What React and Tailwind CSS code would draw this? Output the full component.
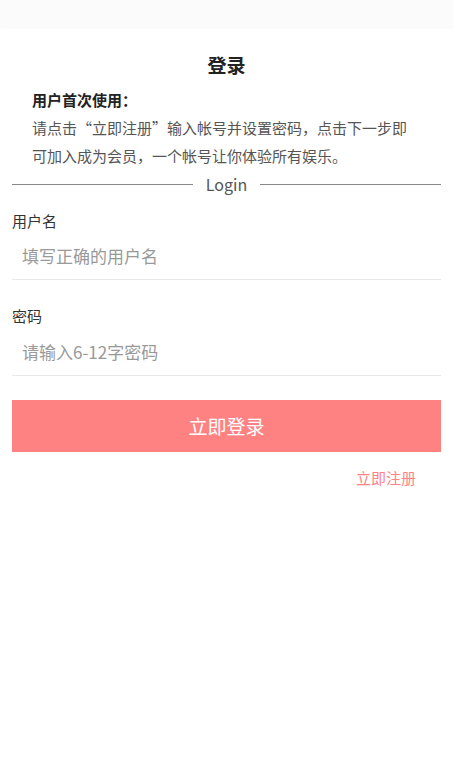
export default function App() {
  return (
    <div
      className="min-h-screen bg-white text-[#333]"
      style={{ fontFamily: '"Microsoft YaHei", "Noto Sans CJK SC", sans-serif' }}
    >
      {/* header strip */}
      <div className="h-[27px] bg-[#fbfbfb] shadow-[0_1px_3px_rgba(0,0,0,0.03)]"></div>

      <div className="px-3">
        <h1 className="mt-[24px] text-center text-[19px] font-bold leading-[28px] text-[#222]">登录</h1>

        <div className="mt-[9px] px-5">
          <p className="text-[15px] font-bold leading-[24px] text-[#222]">用户首次使用：</p>
          <p className="mt-[2px] text-[15px] leading-[28px] text-[#555]">
            请点击“立即注册”输入帐号并设置密码，点击下一步即可加入成为会员，一个帐号让你体验所有娱乐。
          </p>
        </div>

        {/* divider */}
        <div className="mt-[4px] flex items-center gap-[13px]">
          <div className="h-px flex-1 bg-[#888]"></div>
          <span className="text-[16px] leading-[20px] text-[#555]">Login</span>
          <div className="h-px flex-1 bg-[#888]"></div>
        </div>

        <form className="mt-[17px]" onSubmit={(e) => e.preventDefault()}>
          <label className="block text-[15px] leading-[20px] text-[#333]">用户名</label>
          <input
            type="text"
            placeholder="填写正确的用户名"
            className="mt-px block h-[48px] w-full border-b border-[#e8e8e8] px-[10px] text-[17px] outline-none placeholder:text-[#999]"
          />

          <label className="mt-[26px] block text-[15px] leading-[20px] text-[#333]">密码</label>
          <input
            type="password"
            placeholder="请输入6-12字密码"
            className="mt-px block h-[49px] w-full border-b border-[#e8e8e8] px-[10px] text-[17px] outline-none placeholder:text-[#999]"
          />

          <button
            type="submit"
            className="mt-[24px] block h-[52px] w-full bg-[#ff8282] text-[19px] text-white"
          >
            立即登录
          </button>
        </form>

        <div className="mt-[16px] flex justify-end pr-[25px]">
          <a className="text-[15px] leading-[20px] text-[#ff8282]">立即注册</a>
        </div>
      </div>
    </div>
  );
}
